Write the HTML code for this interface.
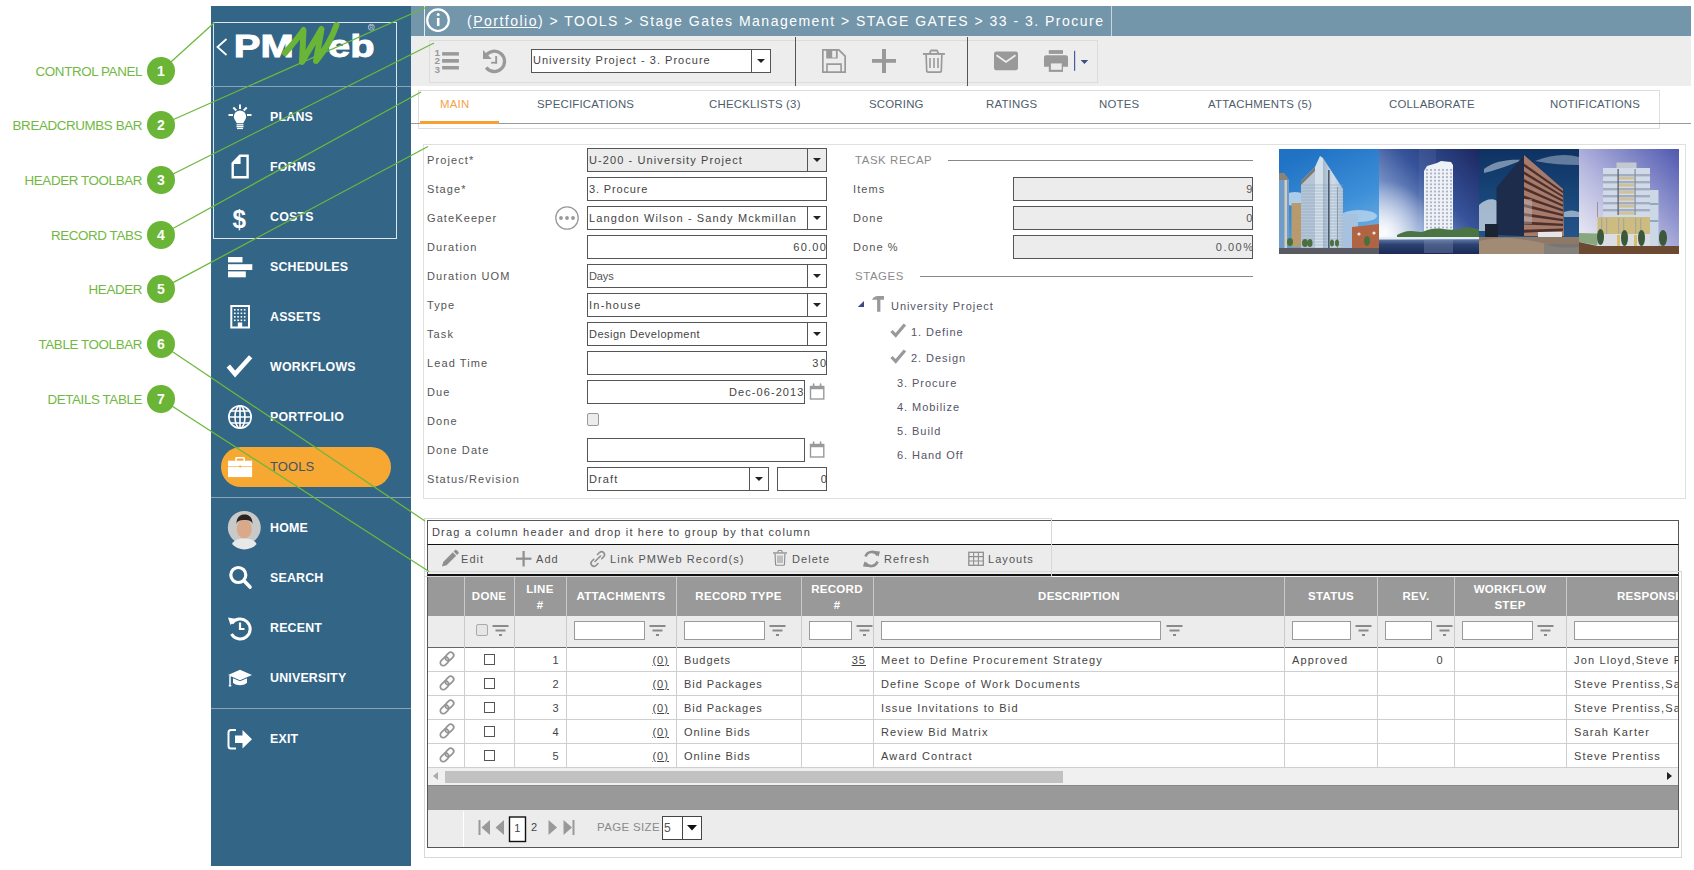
<!DOCTYPE html>
<html><head><meta charset="utf-8">
<style>
*{box-sizing:border-box;margin:0;padding:0}
html,body{width:1694px;height:870px;overflow:hidden;background:#fff}
body{position:relative;font-family:"Liberation Sans",sans-serif;color:#333}
.a{position:absolute}
.t{position:absolute;white-space:nowrap}
/* sidebar */
#sb{left:211px;top:6px;width:200px;height:860px;background:#336587}
.mi{position:absolute;left:59px;color:#fff;font-weight:bold;font-size:12.4px;letter-spacing:0.2px;line-height:14px}
/* breadcrumb */
#bc{left:411px;top:6px;width:1280px;height:30px;background:#7396ab}
#tb{left:411px;top:36px;width:1280px;height:50px;background:#ededed}
.tab{position:absolute;top:97px;font-size:11.4px;color:#4e5d6c;letter-spacing:0.22px;line-height:14px}
.lbl{position:absolute;left:427px;font-size:11px;color:#555;letter-spacing:1.1px;line-height:14px}
.fld{position:absolute;left:587px;width:240px;height:24px;border:1px solid #555;background:#fff;font-size:11px;color:#444;line-height:22px;padding:0 6px;letter-spacing:1.1px;white-space:nowrap;overflow:hidden}
.dd{position:absolute;right:0;top:0;width:19px;height:22px;border-left:1px solid #555}
.dd:after{content:"";position:absolute;left:5px;top:9px;border-left:4px solid transparent;border-right:4px solid transparent;border-top:4.5px solid #222}
.r{text-align:right;padding-right:1px;overflow:visible!important}
</style></head><body>

<!-- SIDEBAR -->
<div id="sb" class="a">
  <div class="a" style="left:1.5px;top:15.5px;width:184px;height:217px;border:1.5px solid #dfe5ea"></div>
  <div class="a" style="left:0;top:80px;width:200px;height:1px;background:#8aa3b5"></div>
  <div class="mi" style="top:104px">PLANS</div>
  <div class="mi" style="top:154px">FORMS</div>
  <div class="mi" style="top:204px">COSTS</div>
  <div class="mi" style="top:254px">SCHEDULES</div>
  <div class="mi" style="top:304px">ASSETS</div>
  <div class="mi" style="top:354px">WORKFLOWS</div>
  <div class="mi" style="top:404px">PORTFOLIO</div>
  <div class="a" style="left:10px;top:441px;width:170px;height:40px;border-radius:20px;background:#f6a833"></div>
  <div class="mi" style="top:454px;color:#3e5468;font-weight:normal;letter-spacing:0.1px;font-size:13px">TOOLS</div>
  <div class="a" style="left:0;top:491px;width:200px;height:1px;background:#8aa3b5"></div>
  <div class="mi" style="top:515px">HOME</div>
  <div class="mi" style="top:565px">SEARCH</div>
  <div class="mi" style="top:615px">RECENT</div>
  <div class="mi" style="top:665px">UNIVERSITY</div>
  <div class="a" style="left:0;top:702px;width:200px;height:1px;background:#8aa3b5"></div>
  <div class="mi" style="top:726px">EXIT</div>
</div>


<!-- LOGO -->
<svg class="a" style="left:211px;top:15px" width="185" height="60" viewBox="0 0 185 60">
  <path d="M15.5 24l-9 8 9 8" fill="none" stroke="#fff" stroke-width="1.8"/>
  <text x="22.8" y="41.6" font-family="Liberation Sans" font-weight="bold" font-size="31.5" fill="#fff" stroke="#fff" stroke-width="0.9" textLength="60" lengthAdjust="spacingAndGlyphs">PM</text>
  <text x="117" y="41.6" font-family="Liberation Sans" font-weight="bold" font-size="31.5" fill="#fff" stroke="#fff" stroke-width="0.9" textLength="46.5" lengthAdjust="spacingAndGlyphs">eb</text>
  <path d="M74 38 C80 31 88 22 92.5 15 L91 47 C98 35 106 22 110.5 14 L105 46 C115 34 122 20 125.5 10" fill="none" stroke="#6ab535" stroke-width="6" stroke-linecap="round" stroke-linejoin="round"/>
  <circle cx="160.3" cy="12.2" r="3" fill="none" stroke="#c9d3db" stroke-width="0.8"/><text x="160.3" y="14.1" text-anchor="middle" font-family="Liberation Sans" font-size="5" fill="#c9d3db">R</text>
</svg>


<!-- SIDEBAR ICONS -->
<svg class="a" style="left:0;top:0;pointer-events:none" width="420" height="870" viewBox="0 0 420 870">
 <g fill="#fff" stroke="none">
  <!-- bulb -->
  <rect x="239" y="104.5" width="2" height="4.5"/>
  <rect x="228.5" y="114" width="4.5" height="2"/>
  <rect x="247" y="114" width="4.5" height="2"/>
  <path d="M232.6 108.2l1.4-1.4 3 3-1.4 1.4z"/>
  <path d="M247.4 108.2l-1.4-1.4-3 3 1.4 1.4z"/>
  <path d="M240 110.5a6.2 6.2 0 0 1 6.2 6.2c0 2.6-2.4 4.3-2.9 6.6h-6.6c-0.5-2.3-2.9-4-2.9-6.6a6.2 6.2 0 0 1 6.2-6.2z"/>
  <rect x="236.5" y="124.2" width="7" height="1.3"/>
  <rect x="236.5" y="126" width="7" height="1.3"/>
  <rect x="237" y="127.8" width="6" height="1.3"/>
  <!-- forms -->
  <path d="M239.5 154.5h9.3v24h-17.3v-15.7zM233.9 164v12.1h12.5v-19.2h-5.8v7.1z" fill-rule="evenodd"/>
  <!-- schedules -->
  <rect x="228" y="257" width="14.5" height="5.4"/>
  <rect x="228" y="264.2" width="24.3" height="5.8"/>
  <rect x="228" y="271.4" width="17.8" height="5.9"/>
  <!-- assets -->
  <path d="M230.3 305h19.7v23.6h-19.7zM232.3 307v19.6h5.5v-4h4.4v4h5.8v-19.6z" fill-rule="evenodd"/>
 </g>
 <g fill="#fff">
  <rect x="234" y="309" width="1.6" height="1.6"/><rect x="237.3" y="309" width="1.6" height="1.6"/><rect x="240.6" y="309" width="1.6" height="1.6"/><rect x="243.9" y="309" width="1.6" height="1.6"/>
  <rect x="234" y="312.5" width="1.6" height="1.6"/><rect x="237.3" y="312.5" width="1.6" height="1.6"/><rect x="240.6" y="312.5" width="1.6" height="1.6"/><rect x="243.9" y="312.5" width="1.6" height="1.6"/>
  <rect x="234" y="316" width="1.6" height="1.6"/><rect x="237.3" y="316" width="1.6" height="1.6"/><rect x="240.6" y="316" width="1.6" height="1.6"/><rect x="243.9" y="316" width="1.6" height="1.6"/>
  <rect x="234" y="319.5" width="1.6" height="1.6"/><rect x="237.3" y="319.5" width="1.6" height="1.6"/><rect x="240.6" y="319.5" width="1.6" height="1.6"/><rect x="243.9" y="319.5" width="1.6" height="1.6"/>
 </g>
 <text x="232.5" y="228" font-family="Liberation Sans" font-weight="bold" font-size="26" fill="#fff" textLength="13.5" lengthAdjust="spacingAndGlyphs">$</text>
 <!-- check -->
 <path d="M229.8 367.8l5.3 6.2 14-15.5" fill="none" stroke="#fff" stroke-width="4.6" stroke-linecap="square"/>
 <!-- globe -->
 <g fill="none" stroke="#fff" stroke-width="1.6">
  <circle cx="240" cy="417" r="11.2"/>
  <ellipse cx="240" cy="417" rx="5" ry="11.2"/>
  <path d="M240 405.8v22.4M228.8 417h22.4M230.5 411h19M230.5 423h19"/>
 </g>
 <!-- briefcase -->
 <g fill="#fff">
  <path d="M235.2 461v-2.6c0-0.8 0.6-1.4 1.4-1.4h7c0.8 0 1.4 0.6 1.4 1.4v2.6h-1.6v-2.4h-6.6v2.4z"/>
  <rect x="228" y="460.7" width="24.1" height="16.4"/>
 </g>
 <rect x="228" y="466" width="24.1" height="1" fill="#f8c880"/>
 <rect x="239.3" y="465.6" width="1.8" height="1.8" fill="#f6a833"/>
 <!-- avatar -->
 <circle cx="244.3" cy="527.5" r="16.5" fill="#c9c9c9"/>
 <ellipse cx="244.3" cy="529" rx="7.5" ry="9.5" fill="#d9a98a"/>
 <path d="M236.5 524c0-7 3.5-9.5 8-9.5s8 2.5 8 9.5c-1-3-3-4-8-4s-7 1-8 4z" fill="#2a2420"/>
 <path d="M232 544c2-4 6-5.5 12.3-5.5s10.3 1.5 12.3 5.5a16.5 16.5 0 0 1-24.6 0z" fill="#e8e8e8"/>
 <!-- search -->
 <g fill="none" stroke="#fff" stroke-linecap="round">
  <circle cx="238.3" cy="575" r="7.5" stroke-width="3.2"/>
  <path d="M244 580.8l6 6.3" stroke-width="3.6"/>
 </g>
 <!-- recent -->
 <g fill="none" stroke="#fff" stroke-width="3">
  <path d="M231.8 623.5a10 10 0 1 1-0.3 10.5"/>
  <path d="M240 622.5v6.5h4.5" stroke-width="2.2"/>
 </g>
 <path d="M228 617.5l8.5 1.5-6 6z" fill="#fff"/>
 <!-- university -->
 <path d="M228 675l12-5.2 12 5.2-12 5.2z" fill="#fff"/>
 <path d="M233 678.2v4.6c2 1.8 4.6 2.4 7 2.4s5-0.6 7-2.4v-4.6l-7 3z" fill="#fff"/>
 <path d="M230 676v8.5" stroke="#fff" stroke-width="1.5"/>
 <path d="M228.8 684.5h2.4v2h-2.4z" fill="#fff"/>
 <!-- exit -->
 <path d="M236 730h-5a2.5 2.5 0 0 0-2.5 2.5v13.5a2.5 2.5 0 0 0 2.5 2.5h5" fill="none" stroke="#fff" stroke-width="2"/>
 <path d="M235 735.5h7.5v-5.5l9.5 9.2-9.5 9.3v-5.5h-7.5z" fill="#fff"/>
</svg>

<!-- BREADCRUMB -->
<div id="bc" class="a">
  <div class="a" style="left:13px;top:0;width:1px;height:30px;background:#e4eaee"></div>
  <div class="a" style="left:700px;top:0;width:1px;height:30px;background:#c8d6de"></div>
  <div class="t" style="left:56px;top:7px;font-size:14px;color:#fff;letter-spacing:1.49px;line-height:16px">(<u>Portfolio</u>) &gt; TOOLS &gt; Stage Gates Management &gt; STAGE GATES &gt; 33 - 3. Procure</div>
</div>

<!-- TOOLBAR -->
<div id="tb" class="a">
  <div class="a" style="left:18px;top:4px;width:669px;height:43px;border:1px solid #dcdcdc"></div>
  <div class="a" style="left:384px;top:1px;width:1px;height:49px;background:#555"></div>
  <div class="a" style="left:556px;top:1px;width:1px;height:49px;background:#555"></div>
</div>
<div class="fld" style="left:531px;top:49px;width:240px;height:24px;line-height:20px;padding-left:1px;letter-spacing:1.02px">University Project - 3. Procure<div class="dd" style="height:22px"></div></div>


<!-- TOOLBAR ICONS -->
<svg class="a" style="left:411px;top:0" width="700" height="90" viewBox="411 0 700 90">
 <!-- info -->
 <circle cx="438" cy="20.2" r="10.8" fill="none" stroke="#fff" stroke-width="2.2"/>
 <rect x="436.9" y="18" width="2.6" height="8" fill="#fff"/>
 <circle cx="438.2" cy="14.6" r="1.5" fill="#fff"/>
 <g fill="#999">
  <!-- list -->
  <text x="434.6" y="55.8" font-family="Liberation Sans" font-weight="bold" font-size="9" textLength="5.5" lengthAdjust="spacingAndGlyphs">1</text>
  <text x="434.6" y="64.4" font-family="Liberation Sans" font-weight="bold" font-size="9" textLength="5.5" lengthAdjust="spacingAndGlyphs">2</text>
  <text x="434.6" y="72.9" font-family="Liberation Sans" font-weight="bold" font-size="9" textLength="5.5" lengthAdjust="spacingAndGlyphs">3</text>
  <rect x="442.1" y="52.1" width="16.8" height="3.5"/>
  <rect x="442.1" y="59" width="16.8" height="3.7"/>
  <rect x="442.1" y="66" width="16.8" height="3.5"/>
  <!-- history -->
  <path d="M483 50.1v8.8h8.7z"/>
  <rect x="495.2" y="56" width="1.9" height="7.6"/>
  <rect x="491.1" y="61.8" width="6" height="1.8"/>
  <!-- save -->
  <path d="M822 49h17.2l6.8 6.8v17.2h-24zM823.7 50.7v20.6h20.6v-14.8l-5.8-5.8z" fill-rule="evenodd"/>
  <path d="M826.2 49.5h11.5v9h-11.5zM832.2 50.6v6.8h3.7v-6.8z" fill-rule="evenodd"/>
  <path d="M826.2 63.3h15.7v9h-15.7zM827.8 64.9v7.4h12.5v-7.4z" fill-rule="evenodd"/>
  <!-- plus -->
  <rect x="882" y="49" width="4" height="24"/>
  <rect x="872" y="59" width="24" height="3.8"/>
  <!-- trash -->
  <rect x="922.9" y="53" width="22" height="1.9"/>
  <path d="M928.5 54l1.3-3.3c0.3-0.8 0.9-1.2 1.7-1.2h5c0.8 0 1.4 0.4 1.7 1.2l1.3 3.3h-1.9l-1-2.6h-5.2l-1 2.6z"/>
  <path d="M925.3 55h17.4l-0.6 16c0 1.2-1 2-2.2 2h-11.8c-1.2 0-2.2-0.8-2.2-2zM927 55l0.5 15.6c0 0.4 0.3 0.7 0.7 0.7h11.6c0.4 0 0.7-0.3 0.7-0.7l0.5-15.6z" fill-rule="evenodd"/>
  <rect x="929.2" y="58" width="1.6" height="10"/>
  <rect x="933.2" y="58" width="1.6" height="10"/>
  <rect x="937.2" y="58" width="1.6" height="10"/>
  <!-- mail -->
  <rect x="994" y="51.5" width="24" height="18.7" rx="2.2"/>
  <!-- print -->
  <rect x="1048.8" y="50.1" width="14.2" height="3.8"/>
  <path d="M1044 66.8v-9.6c0-1.1 0.9-2 2-2h20c1.1 0 2 0.9 2 2v9.6z"/>
  <rect x="1048.8" y="62.4" width="14.2" height="9.5"/>
 </g>
 <path d="M996.5 55.2l9.5 6.8 9.5-6.8" fill="none" stroke="#eee" stroke-width="1.8"/>
 <rect x="1050.9" y="63.4" width="10.8" height="6.4" fill="#ececec"/>
 <path d="M486.2 67.5a10.2 10.2 0 1 0-0.5-11.6" fill="none" stroke="#999" stroke-width="3.3"/>
 <rect x="1074" y="50.8" width="1.2" height="20" fill="#4a5a9a"/>
 <path d="M1080.7 60h7.5l-3.75 4z" fill="#3d4d8a"/>
</svg>

<!-- TABS -->
<div class="a" style="left:418px;top:90px;width:1242px;height:39px;border:1px solid #dedede"></div>
<div class="a" style="left:411px;top:123px;width:1280px;height:1px;background:#9a9a9a"></div>
<div class="a" style="left:420px;top:121px;width:79px;height:2.5px;background:#f5a033"></div>
<div class="tab" style="left:440px;color:#f4a24a">MAIN</div>
<div class="tab" style="left:537px">SPECIFICATIONS</div>
<div class="tab" style="left:709px">CHECKLISTS (3)</div>
<div class="tab" style="left:869px">SCORING</div>
<div class="tab" style="left:986px">RATINGS</div>
<div class="tab" style="left:1099px">NOTES</div>
<div class="tab" style="left:1208px">ATTACHMENTS (5)</div>
<div class="tab" style="left:1389px">COLLABORATE</div>
<div class="tab" style="left:1550px">NOTIFICATIONS</div>

<!-- FORM BOX -->
<div class="a" style="left:423px;top:144px;width:1263px;height:355px;border:1px solid #e0e0e0"></div>


<!-- FORM LEFT -->
<div class="lbl" style="top:153px">Project*</div>
<div class="lbl" style="top:182px">Stage*</div>
<div class="lbl" style="top:211px">GateKeeper</div>
<div class="lbl" style="top:240px">Duration</div>
<div class="lbl" style="top:269px">Duration UOM</div>
<div class="lbl" style="top:298px">Type</div>
<div class="lbl" style="top:327px">Task</div>
<div class="lbl" style="top:356px">Lead Time</div>
<div class="lbl" style="top:385px">Due</div>
<div class="lbl" style="top:414px">Done</div>
<div class="lbl" style="top:443px">Done Date</div>
<div class="lbl" style="top:472px">Status/Revision</div>

<div class="fld" style="top:148px;background:#ececec;padding-left:1px;letter-spacing:1.1px">U-200 - University Project<div class="dd"></div></div>
<div class="fld" style="top:177px;padding-left:1px;letter-spacing:0.84px">3. Procure</div>
<div class="fld" style="top:206px;padding-left:1px;letter-spacing:1.13px">Langdon Wilson - Sandy Mckmillan<div class="dd" style="background:#fff"></div></div>
<div class="fld r" style="top:235px;letter-spacing:1.22px"><span style="position:relative;left:2px">60.00</span></div>
<div class="fld" style="top:264px;padding-left:1px;color:#555;letter-spacing:-0.1px">Days<div class="dd"></div></div>
<div class="fld" style="top:293px;padding-left:1px;letter-spacing:1.23px">In-house<div class="dd"></div></div>
<div class="fld" style="top:322px;padding-left:1px;letter-spacing:0.5px">Design Development<div class="dd"></div></div>
<div class="fld r" style="top:351px;letter-spacing:1.8px"><span style="position:relative;left:3px">30</span></div>
<div class="fld r" style="top:380px;width:218px;letter-spacing:1.09px"><span style="position:relative;left:1.5px">Dec-06-2013</span></div>
<div class="a" style="left:587px;top:413px;width:12px;height:13px;border:1px solid #999;border-radius:2px;background:#ececec"></div>
<div class="fld" style="top:438px;width:218px"></div>
<div class="fld" style="top:467px;width:182px;padding-left:1px;letter-spacing:1.12px">Draft<div class="dd"></div></div>
<div class="fld r" style="top:467px;left:777px;width:50px"><span style="position:relative;left:3px">0</span></div>


<!-- TASK RECAP -->
<div class="t" style="left:855px;top:153px;font-size:11.4px;color:#8a8a8a;letter-spacing:0.6px;line-height:14px">TASK RECAP</div>
<div class="a" style="left:948px;top:160px;width:305px;height:1px;background:#888"></div>
<div class="lbl" style="left:853px;top:182px">Items</div>
<div class="lbl" style="left:853px;top:211px">Done</div>
<div class="lbl" style="left:853px;top:240px">Done %</div>
<div class="fld r" style="left:1013px;top:177px;width:240px;background:#ececec;color:#555"><span style="position:relative;left:2.5px">9</span></div>
<div class="fld r" style="left:1013px;top:206px;width:240px;background:#ececec;color:#555"><span style="position:relative;left:2.5px">0</span></div>
<div class="fld r" style="left:1013px;top:235px;width:240px;background:#ececec;color:#555;letter-spacing:1.5px"><span style="position:relative;left:3.5px">0.00%</span></div>
<div class="t" style="left:855px;top:269px;font-size:11.4px;color:#8a8a8a;letter-spacing:0.6px;line-height:14px">STAGES</div>
<div class="a" style="left:920px;top:276px;width:333px;height:1px;background:#888"></div>
<div class="lbl" style="left:891px;top:299px;color:#556;letter-spacing:0.95px">University Project</div>
<div class="lbl" style="left:911px;top:325px;color:#556;letter-spacing:0.95px">1. Define</div>
<div class="lbl" style="left:911px;top:351px;color:#556;letter-spacing:0.95px">2. Design</div>
<div class="lbl" style="left:897px;top:376px;color:#556;letter-spacing:0.95px">3. Procure</div>
<div class="lbl" style="left:897px;top:400px;color:#556;letter-spacing:0.95px">4. Mobilize</div>
<div class="lbl" style="left:897px;top:424px;color:#556;letter-spacing:0.95px">5. Build</div>
<div class="lbl" style="left:897px;top:448px;color:#556;letter-spacing:0.95px">6. Hand Off</div>



<!-- FORM ICONS -->
<svg class="a" style="left:550px;top:140px" width="380" height="340" viewBox="550 140 380 340">
 <circle cx="567" cy="218" r="11.2" fill="#fff" stroke="#9a9a9a" stroke-width="1.3"/>
 <circle cx="561" cy="218" r="1.9" fill="#999"/><circle cx="567" cy="218" r="1.9" fill="#999"/><circle cx="573" cy="218" r="1.9" fill="#999"/>
 <g fill="none" stroke="#9a9a9a">
  <rect x="810.5" y="386.5" width="13.3" height="12.5" stroke-width="1.4"/>
  <path d="M810.5 388h13.3" stroke-width="2.5"/>
  <path d="M813.6 384v4M820.6 384v4" stroke-width="1.6" stroke-linecap="round"/>
  <rect x="810.5" y="444.5" width="13.3" height="12.5" stroke-width="1.4"/>
  <path d="M810.5 446h13.3" stroke-width="2.5"/>
  <path d="M813.6 442v4M820.6 442v4" stroke-width="1.6" stroke-linecap="round"/>
 </g>
 <path d="M857.8 307l6.2-6v6z" fill="#3d4a80"/>
 <path d="M872 300c1-2.5 3-4 6-4h6v3.7h-3.6v12h-3.3v-12h-2.6c-1.2 0-2 0.2-2.5 0.3z" fill="#999"/>
 <path d="M891.5 331l4.2 4.3 9.2-10.8" fill="none" stroke="#999" stroke-width="3.2"/>
 <path d="M891.5 357l4.2 4.3 9.2-10.8" fill="none" stroke="#999" stroke-width="3.2"/>
</svg>

<!-- IMAGES -->
<svg class="a" style="left:1279px;top:149px" width="400" height="105" viewBox="0 0 400 105">
 <defs>
  <linearGradient id="g1" x1="0.3" y1="0" x2="0.7" y2="1"><stop offset="0" stop-color="#1f72c4"/><stop offset="0.55" stop-color="#3d8fd8"/><stop offset="1" stop-color="#7ab6e6"/></linearGradient>
  <linearGradient id="g2" x1="1" y1="0" x2="0" y2="1"><stop offset="0" stop-color="#1c2760"/><stop offset="0.4" stop-color="#36539a"/><stop offset="0.75" stop-color="#8ea8d6"/><stop offset="1" stop-color="#f0f4fa"/></linearGradient>
  <radialGradient id="g2r" cx="0.05" cy="0.8" r="0.5"><stop offset="0" stop-color="#fff" stop-opacity="0.95"/><stop offset="1" stop-color="#fff" stop-opacity="0"/></radialGradient>
  <linearGradient id="g2w" x1="0" y1="0" x2="0" y2="1"><stop offset="0" stop-color="#5c76a4"/><stop offset="0.35" stop-color="#2c4272"/><stop offset="1" stop-color="#1a2a56"/></linearGradient>
  <linearGradient id="g3" x1="0" y1="0" x2="0" y2="1"><stop offset="0" stop-color="#0e3262"/><stop offset="0.6" stop-color="#1c4c80"/><stop offset="1" stop-color="#2a5a8c"/></linearGradient>
  <linearGradient id="g4" x1="0" y1="1" x2="1" y2="0"><stop offset="0" stop-color="#f6f4f8"/><stop offset="0.45" stop-color="#b4b6de"/><stop offset="1" stop-color="#5058b0"/></linearGradient>
  <linearGradient id="gb1" x1="0" y1="0" x2="1" y2="0"><stop offset="0" stop-color="#a4b8cc"/><stop offset="0.5" stop-color="#d0dce8"/><stop offset="1" stop-color="#b4c6d8"/></linearGradient>
 </defs>
 <!-- image 1 -->
 <rect x="0" y="0" width="100" height="105" fill="url(#g1)"/>
 <ellipse cx="16" cy="50" rx="12" ry="7" fill="#d4e6f4" opacity="0.75"/>
 <ellipse cx="80" cy="67" rx="18" ry="6" fill="#d8e8f4" opacity="0.6"/>
 <path d="M0 24h5l5 7v73H0z" fill="#6f9cc8"/>
 <path d="M0 24h5l5 7H0z" fill="#8a8478"/>
 <rect x="5.5" y="31" width="2.5" height="73" fill="#d4ccbc"/>
 <rect x="12.5" y="54" width="9.5" height="44" fill="#b89a6c"/>
 <path d="M22 32l14-14v86H22z" fill="#b6c6d8"/>
 <path d="M22 32l14-14v4l-14 14z" fill="#7a7a70"/>
 <path d="M36 18l5-11 3 2v95h-8z" fill="#d4e0ea"/>
 <path d="M44 9l20 31v64H44z" fill="url(#gb1)"/>
 <g stroke="#8ea4bc" stroke-width="0.6" opacity="0.9"><path d="M22 36h42"/><path d="M22 39h42"/><path d="M22 42h42"/><path d="M22 45h42"/><path d="M22 48h42"/><path d="M22 51h42"/><path d="M22 54h42"/><path d="M22 57h42"/><path d="M22 60h42"/><path d="M22 63h42"/><path d="M22 66h42"/><path d="M22 69h42"/><path d="M22 72h42"/><path d="M22 75h42"/><path d="M22 78h42"/><path d="M22 81h42"/><path d="M22 84h42"/><path d="M22 87h42"/><path d="M22 90h42"/><path d="M22 93h42"/><path d="M22 96h42"/><path d="M22 99h42"/></g>
 <rect x="49" y="21" width="1.6" height="80" fill="#4c5a6c"/>
 <rect x="58" y="38" width="1" height="62" fill="#8a9aac"/>
 <rect x="64" y="65" width="15" height="36" fill="#a6c2de"/>
 <path d="M73 78l27-3v29H73z" fill="#b06444"/>
 <circle cx="80" cy="85" r="1.6" fill="#f0e8e0"/><circle cx="95" cy="84" r="1.6" fill="#f0e8e0"/>
 <g fill="#4a7040"><ellipse cx="11" cy="93" rx="3" ry="4"/><ellipse cx="26" cy="94" rx="3" ry="4"/><ellipse cx="31" cy="94" rx="2.5" ry="4"/><ellipse cx="53" cy="94" rx="2" ry="3.5"/><ellipse cx="58" cy="94" rx="2" ry="3.5"/><ellipse cx="88" cy="92" rx="3" ry="5"/></g>
 <rect x="0" y="99" width="100" height="6" fill="#5a5a62"/>
 <!-- image 2 -->
 <rect x="100" y="0" width="100" height="105" fill="url(#g2)"/>
 <rect x="100" y="0" width="100" height="105" fill="url(#g2r)"/>
 <rect x="140" y="0" width="17" height="104" fill="#ffffff" opacity="0.06"/>
 <path d="M145 22l3-5 10-3 4-2 10 1 2 3v66h-29z" fill="#eef1f5"/>
 <g fill="#aab6c8"><rect x="147" y="20.0" width="2" height="1.8"/><rect x="151" y="20.0" width="2" height="1.8"/><rect x="155" y="20.0" width="2" height="1.8"/><rect x="159" y="20.0" width="2" height="1.8"/><rect x="163" y="20.0" width="2" height="1.8"/><rect x="167" y="20.0" width="2" height="1.8"/><rect x="171" y="20.0" width="2" height="1.8"/><rect x="147" y="23.6" width="2" height="1.8"/><rect x="151" y="23.6" width="2" height="1.8"/><rect x="155" y="23.6" width="2" height="1.8"/><rect x="159" y="23.6" width="2" height="1.8"/><rect x="163" y="23.6" width="2" height="1.8"/><rect x="167" y="23.6" width="2" height="1.8"/><rect x="171" y="23.6" width="2" height="1.8"/><rect x="147" y="27.2" width="2" height="1.8"/><rect x="151" y="27.2" width="2" height="1.8"/><rect x="155" y="27.2" width="2" height="1.8"/><rect x="159" y="27.2" width="2" height="1.8"/><rect x="163" y="27.2" width="2" height="1.8"/><rect x="167" y="27.2" width="2" height="1.8"/><rect x="171" y="27.2" width="2" height="1.8"/><rect x="147" y="30.8" width="2" height="1.8"/><rect x="151" y="30.8" width="2" height="1.8"/><rect x="155" y="30.8" width="2" height="1.8"/><rect x="159" y="30.8" width="2" height="1.8"/><rect x="163" y="30.8" width="2" height="1.8"/><rect x="167" y="30.8" width="2" height="1.8"/><rect x="171" y="30.8" width="2" height="1.8"/><rect x="147" y="34.4" width="2" height="1.8"/><rect x="151" y="34.4" width="2" height="1.8"/><rect x="155" y="34.4" width="2" height="1.8"/><rect x="159" y="34.4" width="2" height="1.8"/><rect x="163" y="34.4" width="2" height="1.8"/><rect x="167" y="34.4" width="2" height="1.8"/><rect x="171" y="34.4" width="2" height="1.8"/><rect x="147" y="38.0" width="2" height="1.8"/><rect x="151" y="38.0" width="2" height="1.8"/><rect x="155" y="38.0" width="2" height="1.8"/><rect x="159" y="38.0" width="2" height="1.8"/><rect x="163" y="38.0" width="2" height="1.8"/><rect x="167" y="38.0" width="2" height="1.8"/><rect x="171" y="38.0" width="2" height="1.8"/><rect x="147" y="41.6" width="2" height="1.8"/><rect x="151" y="41.6" width="2" height="1.8"/><rect x="155" y="41.6" width="2" height="1.8"/><rect x="159" y="41.6" width="2" height="1.8"/><rect x="163" y="41.6" width="2" height="1.8"/><rect x="167" y="41.6" width="2" height="1.8"/><rect x="171" y="41.6" width="2" height="1.8"/><rect x="147" y="45.2" width="2" height="1.8"/><rect x="151" y="45.2" width="2" height="1.8"/><rect x="155" y="45.2" width="2" height="1.8"/><rect x="159" y="45.2" width="2" height="1.8"/><rect x="163" y="45.2" width="2" height="1.8"/><rect x="167" y="45.2" width="2" height="1.8"/><rect x="171" y="45.2" width="2" height="1.8"/><rect x="147" y="48.8" width="2" height="1.8"/><rect x="151" y="48.8" width="2" height="1.8"/><rect x="155" y="48.8" width="2" height="1.8"/><rect x="159" y="48.8" width="2" height="1.8"/><rect x="163" y="48.8" width="2" height="1.8"/><rect x="167" y="48.8" width="2" height="1.8"/><rect x="171" y="48.8" width="2" height="1.8"/><rect x="147" y="52.4" width="2" height="1.8"/><rect x="151" y="52.4" width="2" height="1.8"/><rect x="155" y="52.4" width="2" height="1.8"/><rect x="159" y="52.4" width="2" height="1.8"/><rect x="163" y="52.4" width="2" height="1.8"/><rect x="167" y="52.4" width="2" height="1.8"/><rect x="171" y="52.4" width="2" height="1.8"/><rect x="147" y="56.0" width="2" height="1.8"/><rect x="151" y="56.0" width="2" height="1.8"/><rect x="155" y="56.0" width="2" height="1.8"/><rect x="159" y="56.0" width="2" height="1.8"/><rect x="163" y="56.0" width="2" height="1.8"/><rect x="167" y="56.0" width="2" height="1.8"/><rect x="171" y="56.0" width="2" height="1.8"/><rect x="147" y="59.6" width="2" height="1.8"/><rect x="151" y="59.6" width="2" height="1.8"/><rect x="155" y="59.6" width="2" height="1.8"/><rect x="159" y="59.6" width="2" height="1.8"/><rect x="163" y="59.6" width="2" height="1.8"/><rect x="167" y="59.6" width="2" height="1.8"/><rect x="171" y="59.6" width="2" height="1.8"/><rect x="147" y="63.2" width="2" height="1.8"/><rect x="151" y="63.2" width="2" height="1.8"/><rect x="155" y="63.2" width="2" height="1.8"/><rect x="159" y="63.2" width="2" height="1.8"/><rect x="163" y="63.2" width="2" height="1.8"/><rect x="167" y="63.2" width="2" height="1.8"/><rect x="171" y="63.2" width="2" height="1.8"/><rect x="147" y="66.8" width="2" height="1.8"/><rect x="151" y="66.8" width="2" height="1.8"/><rect x="155" y="66.8" width="2" height="1.8"/><rect x="159" y="66.8" width="2" height="1.8"/><rect x="163" y="66.8" width="2" height="1.8"/><rect x="167" y="66.8" width="2" height="1.8"/><rect x="171" y="66.8" width="2" height="1.8"/><rect x="147" y="70.4" width="2" height="1.8"/><rect x="151" y="70.4" width="2" height="1.8"/><rect x="155" y="70.4" width="2" height="1.8"/><rect x="159" y="70.4" width="2" height="1.8"/><rect x="163" y="70.4" width="2" height="1.8"/><rect x="167" y="70.4" width="2" height="1.8"/><rect x="171" y="70.4" width="2" height="1.8"/><rect x="147" y="74.0" width="2" height="1.8"/><rect x="151" y="74.0" width="2" height="1.8"/><rect x="155" y="74.0" width="2" height="1.8"/><rect x="159" y="74.0" width="2" height="1.8"/><rect x="163" y="74.0" width="2" height="1.8"/><rect x="167" y="74.0" width="2" height="1.8"/><rect x="171" y="74.0" width="2" height="1.8"/><rect x="147" y="77.6" width="2" height="1.8"/><rect x="151" y="77.6" width="2" height="1.8"/><rect x="155" y="77.6" width="2" height="1.8"/><rect x="159" y="77.6" width="2" height="1.8"/><rect x="163" y="77.6" width="2" height="1.8"/><rect x="167" y="77.6" width="2" height="1.8"/><rect x="171" y="77.6" width="2" height="1.8"/><rect x="147" y="81.2" width="2" height="1.8"/><rect x="151" y="81.2" width="2" height="1.8"/><rect x="155" y="81.2" width="2" height="1.8"/><rect x="159" y="81.2" width="2" height="1.8"/><rect x="163" y="81.2" width="2" height="1.8"/><rect x="167" y="81.2" width="2" height="1.8"/><rect x="171" y="81.2" width="2" height="1.8"/></g>
 <path d="M118 86c4-2 8-4 14-4s10 2 14 0 10-3 18-2 14 1 20-1 8 0 16 1v8h-82z" fill="#4a7444"/>
 <rect x="100" y="88" width="100" height="2.5" fill="#e4ecf4"/>
 <rect x="100" y="90.5" width="100" height="14.5" fill="url(#g2w)"/>
 <rect x="145" y="91" width="29" height="13" fill="#8496b8" opacity="0.35"/>
 <!-- image 3 -->
 <rect x="200" y="0" width="100" height="105" fill="url(#g3)"/>
 <path d="M205 20c10-8 25-10 40-9-10 3-20 8-40 13z" fill="#dce6f0" opacity="0.5"/>
 <path d="M256 12c15-6 30-8 44-4v8c-14 0-28-1-44-4z" fill="#dce6f0" opacity="0.4"/>
 <path d="M200 56c6-6 14-7 18-4v30h-18z" fill="#e0e8f0" opacity="0.7"/>
 <path d="M285 63c5-2 10-2 15 0v5h-15z" fill="#e0e8f0" opacity="0.6"/>
 <path d="M245 6L217.5 38.5V86l27.5 1z" fill="#1c2c4a"/>
 <path d="M245 6L284 40l1 47h-40z" fill="#a87a6a"/>
 <g fill="#3c2424" opacity="0.85"><path d="M245 14.5L284 42L284 44.2L245 17.5z"/><path d="M245 22.3L284 46.4L284 48.6L245 25.3z"/><path d="M245 30L284 50.7L284 52.900000000000006L245 33z"/><path d="M245 38L284 55.5L284 57.7L245 41z"/><path d="M245 46.4L284 60.3L284 62.5L245 49.4z"/><path d="M245 54.9L284 65L284 67.2L245 57.9z"/><path d="M245 64L284 70L284 72.2L245 67z"/><path d="M245 72.4L284 74.8L284 77.0L245 75.4z"/><path d="M245 80.8L284 79.6L284 81.8L245 83.8z"/></g>
 <rect x="245" y="50" width="8" height="25" fill="#d8d0d0" opacity="0.35"/>
 <rect x="206" y="75" width="13" height="13" fill="#1a2434"/>
 <rect x="259" y="83" width="24" height="7" fill="#e4e6ea"/>
 <path d="M200 88h100v17H200z" fill="#8e7866"/>
 <path d="M200 92c12-3 28-4 40-2s22 3 30 6 20 3 30 2v7H200z" fill="#a89078" opacity="0.8"/>
 <path d="M265 95h35v10h-35z" fill="#607080" opacity="0.45"/>
 <!-- image 4 -->
 <rect x="300" y="0" width="100" height="105" fill="url(#g4)"/>
 <rect x="337.5" y="13.5" width="20" height="5.5" fill="#c4c8d0"/>
 <rect x="324" y="19" width="47" height="49" fill="#d0dae8"/>
 <g fill="#9aa2b6" opacity="0.8"><rect x="324" y="25" width="47" height="2.4"/><rect x="324" y="32" width="47" height="2.4"/><rect x="324" y="39" width="47" height="2.4"/><rect x="324" y="46" width="47" height="2.4"/><rect x="324" y="53" width="47" height="2.4"/><rect x="324" y="60" width="47" height="2.4"/></g>
 <g fill="#d4c088" opacity="0.9"><rect x="339.5" y="28" width="16" height="2.6"/><rect x="339.5" y="35" width="16" height="2.6"/><rect x="339.5" y="42" width="16" height="2.6"/><rect x="339.5" y="49" width="16" height="2.6"/><rect x="339.5" y="56" width="16" height="2.6"/><rect x="339.5" y="63" width="16" height="2.6"/></g>
 <rect x="338.5" y="20" width="1.2" height="46" fill="#505868"/>
 <rect x="355.5" y="20" width="1.2" height="46" fill="#8890a0"/>
 <rect x="371" y="41" width="8.5" height="58" fill="#ccd8e6"/>
 <rect x="371" y="54" width="8.5" height="2" fill="#90a8c0"/><rect x="371" y="71" width="8.5" height="2" fill="#90a8c0"/>
 <rect x="318.5" y="68" width="52.5" height="17" fill="#ccbc80"/>
 <g fill="#a0a4a8" opacity="0.8"><rect x="322" y="69" width="1.2" height="16"/><rect x="327" y="69" width="1.2" height="16"/><rect x="339" y="69" width="1.2" height="16"/><rect x="344" y="69" width="1.2" height="16"/><rect x="356" y="69" width="1.2" height="16"/><rect x="361" y="69" width="1.2" height="16"/></g>
 <rect x="318.5" y="85" width="52.5" height="12" fill="#dadde2"/>
 <g fill="#d8bc70"><rect x="338" y="86" width="3" height="11"/><rect x="355" y="86" width="3" height="11"/></g>
 <rect x="318" y="53" width="0.8" height="15" fill="#888"/>
 <path d="M300 84l18.5 0.5v12l-18.5-3.5z" fill="#8aa880"/>
 <g fill="#3c583a">
  <ellipse cx="321.5" cy="88" rx="3.5" ry="8"/><ellipse cx="345.5" cy="89" rx="3.5" ry="8"/><ellipse cx="362.5" cy="89" rx="3.5" ry="8"/><ellipse cx="384" cy="89" rx="4" ry="8"/>
 </g>
 <path d="M300 93l18.5 4h81.5v8H300z" fill="#6c4a32"/>
</svg>

<!-- TABLE -->
<div class="a" style="left:427px;top:520px;width:1252px;height:25px;border:1px solid #555;border-bottom:none;background:#fff"></div>
<div class="t" style="left:432px;top:525px;font-size:11px;color:#444;letter-spacing:1.18px;line-height:14px">Drag a column header and drop it here to group by that column</div>
<div class="a" style="left:427px;top:544px;width:1252px;height:32px;border-top:1.5px solid #111;border-bottom:2px solid #111;border-left:1px solid #555;border-right:1px solid #555;background:#ececec"></div>
<div class="a" style="left:427px;top:576px;width:1252px;height:272px;border-left:1px solid #555;border-right:1px solid #555;border-bottom:1px solid #555;overflow:hidden">
  <div class="a" style="left:0;top:1px;width:1252px;height:39px;background:#999"></div>
  <div class="a" style="left:0;top:40px;width:1252px;height:32px;background:#ececec;border-bottom:1px solid #666"></div>
</div>

<div class="a" style="left:463.9px;top:577px;width:1px;height:70px;background:#c9c9c9"></div>
<div class="a" style="left:463.9px;top:647px;width:1px;height:120px;background:#cfcfcf"></div>
<div class="a" style="left:513.9px;top:577px;width:1px;height:70px;background:#c9c9c9"></div>
<div class="a" style="left:513.9px;top:647px;width:1px;height:120px;background:#cfcfcf"></div>
<div class="a" style="left:565.7px;top:577px;width:1px;height:70px;background:#c9c9c9"></div>
<div class="a" style="left:565.7px;top:647px;width:1px;height:120px;background:#cfcfcf"></div>
<div class="a" style="left:675.8px;top:577px;width:1px;height:70px;background:#c9c9c9"></div>
<div class="a" style="left:675.8px;top:647px;width:1px;height:120px;background:#cfcfcf"></div>
<div class="a" style="left:800.7px;top:577px;width:1px;height:70px;background:#c9c9c9"></div>
<div class="a" style="left:800.7px;top:647px;width:1px;height:120px;background:#cfcfcf"></div>
<div class="a" style="left:872.9px;top:577px;width:1px;height:70px;background:#c9c9c9"></div>
<div class="a" style="left:872.9px;top:647px;width:1px;height:120px;background:#cfcfcf"></div>
<div class="a" style="left:1283.8px;top:577px;width:1px;height:70px;background:#c9c9c9"></div>
<div class="a" style="left:1283.8px;top:647px;width:1px;height:120px;background:#cfcfcf"></div>
<div class="a" style="left:1376.9px;top:577px;width:1px;height:70px;background:#c9c9c9"></div>
<div class="a" style="left:1376.9px;top:647px;width:1px;height:120px;background:#cfcfcf"></div>
<div class="a" style="left:1454.0px;top:577px;width:1px;height:70px;background:#c9c9c9"></div>
<div class="a" style="left:1454.0px;top:647px;width:1px;height:120px;background:#cfcfcf"></div>
<div class="a" style="left:1565.9px;top:577px;width:1px;height:70px;background:#c9c9c9"></div>
<div class="a" style="left:1565.9px;top:647px;width:1px;height:120px;background:#cfcfcf"></div>
<div class="a" style="left:428px;top:671px;width:1250px;height:1px;background:#cfcfcf"></div>
<div class="a" style="left:428px;top:695px;width:1250px;height:1px;background:#cfcfcf"></div>
<div class="a" style="left:428px;top:719px;width:1250px;height:1px;background:#cfcfcf"></div>
<div class="a" style="left:428px;top:743px;width:1250px;height:1px;background:#cfcfcf"></div>
<div class="a" style="left:428px;top:767px;width:1250px;height:1px;background:#cfcfcf"></div>
<div class="t" style="left:389px;width:200px;text-align:center;top:590px;font-size:11.5px;font-weight:bold;color:#fff;line-height:13px;letter-spacing:0.3px">DONE</div>
<div class="t" style="left:480px;width:120px;text-align:center;top:581px;font-size:11.5px;font-weight:bold;color:#fff;line-height:16px;letter-spacing:0.3px">LINE<br>#</div>
<div class="t" style="left:521px;width:200px;text-align:center;top:590px;font-size:11.5px;font-weight:bold;color:#fff;line-height:13px;letter-spacing:0.3px">ATTACHMENTS</div>
<div class="t" style="left:638.5px;width:200px;text-align:center;top:590px;font-size:11.5px;font-weight:bold;color:#fff;line-height:13px;letter-spacing:0.3px">RECORD TYPE</div>
<div class="t" style="left:777px;width:120px;text-align:center;top:581px;font-size:11.5px;font-weight:bold;color:#fff;line-height:16px;letter-spacing:0.3px">RECORD<br>#</div>
<div class="t" style="left:979px;width:200px;text-align:center;top:590px;font-size:11.5px;font-weight:bold;color:#fff;line-height:13px;letter-spacing:0.3px">DESCRIPTION</div>
<div class="t" style="left:1231px;width:200px;text-align:center;top:590px;font-size:11.5px;font-weight:bold;color:#fff;line-height:13px;letter-spacing:0.3px">STATUS</div>
<div class="t" style="left:1316px;width:200px;text-align:center;top:590px;font-size:11.5px;font-weight:bold;color:#fff;line-height:13px;letter-spacing:0.3px">REV.</div>
<div class="t" style="left:1450px;width:120px;text-align:center;top:581px;font-size:11.5px;font-weight:bold;color:#fff;line-height:16px;letter-spacing:0.3px">WORKFLOW<br>STEP</div>
<div class="a" style="left:1567px;top:577px;width:111px;height:70px;overflow:hidden"><div class="t" style="left:50px;top:13px;font-size:11.5px;font-weight:bold;color:#fff;line-height:13px;letter-spacing:0.3px">RESPONSIBLE</div></div>
<div class="a" style="left:574px;top:621px;width:71px;height:19px;border:1px solid #9a9a9a;background:#fff"></div>
<svg class="a" style="left:649px;top:624px" width="17" height="13" viewBox="0 0 17 13"><path d="M0.5 2h16M3.5 6.5h10M7 11h3" stroke="#8a8a8a" stroke-width="1.8"/></svg>
<div class="a" style="left:684px;top:621px;width:81px;height:19px;border:1px solid #9a9a9a;background:#fff"></div>
<svg class="a" style="left:769px;top:624px" width="17" height="13" viewBox="0 0 17 13"><path d="M0.5 2h16M3.5 6.5h10M7 11h3" stroke="#8a8a8a" stroke-width="1.8"/></svg>
<div class="a" style="left:809px;top:621px;width:43px;height:19px;border:1px solid #9a9a9a;background:#fff"></div>
<svg class="a" style="left:856px;top:624px" width="17" height="13" viewBox="0 0 17 13"><path d="M0.5 2h16M3.5 6.5h10M7 11h3" stroke="#8a8a8a" stroke-width="1.8"/></svg>
<div class="a" style="left:881px;top:621px;width:280px;height:19px;border:1px solid #9a9a9a;background:#fff"></div>
<svg class="a" style="left:1166px;top:624px" width="17" height="13" viewBox="0 0 17 13"><path d="M0.5 2h16M3.5 6.5h10M7 11h3" stroke="#8a8a8a" stroke-width="1.8"/></svg>
<div class="a" style="left:1292px;top:621px;width:59px;height:19px;border:1px solid #9a9a9a;background:#fff"></div>
<svg class="a" style="left:1355px;top:624px" width="17" height="13" viewBox="0 0 17 13"><path d="M0.5 2h16M3.5 6.5h10M7 11h3" stroke="#8a8a8a" stroke-width="1.8"/></svg>
<div class="a" style="left:1385px;top:621px;width:47px;height:19px;border:1px solid #9a9a9a;background:#fff"></div>
<svg class="a" style="left:1436px;top:624px" width="17" height="13" viewBox="0 0 17 13"><path d="M0.5 2h16M3.5 6.5h10M7 11h3" stroke="#8a8a8a" stroke-width="1.8"/></svg>
<div class="a" style="left:1462px;top:621px;width:71px;height:19px;border:1px solid #9a9a9a;background:#fff"></div>
<svg class="a" style="left:1537px;top:624px" width="17" height="13" viewBox="0 0 17 13"><path d="M0.5 2h16M3.5 6.5h10M7 11h3" stroke="#8a8a8a" stroke-width="1.8"/></svg>
<div class="a" style="left:1567px;top:617px;width:111px;height:29px;overflow:hidden"><div class="a" style="left:7px;top:4px;width:120px;height:19px;border:1px solid #9a9a9a;background:#fff"></div></div>
<div class="a" style="left:476px;top:624px;width:12px;height:12px;border:1px solid #aaa;border-radius:2px;background:#e6e6e6"></div>
<svg class="a" style="left:492px;top:624px" width="17" height="13" viewBox="0 0 17 13"><path d="M0.5 2h16M3.5 6.5h10M7 11h3" stroke="#8a8a8a" stroke-width="1.8"/></svg>
<svg class="a" style="left:437px;top:649px" width="20" height="20" viewBox="0 0 20 20"><g fill="none" stroke="#959595" stroke-width="1.7" transform="rotate(-45 10 10)"><rect x="1.8" y="7" width="9.5" height="6" rx="3"/><rect x="8.7" y="7" width="9.5" height="6" rx="3"/></g></svg>
<div class="a" style="left:484px;top:654px;width:11px;height:11px;border:1.2px solid #555;background:#fff"></div>
<div class="t" style="left:500px;width:59px;text-align:right;top:653px;font-size:11px;color:#444;line-height:14px;letter-spacing:0.5px">1</div>
<div class="t" style="left:600px;width:69px;text-align:right;top:653px;font-size:11px;color:#444;line-height:14px;letter-spacing:1.05px"><u>(0)</u></div>
<div class="t" style="left:684px;top:653px;font-size:11px;color:#444;line-height:14px;letter-spacing:0.95px">Budgets</div>
<div class="t" style="left:800px;width:66px;text-align:right;top:653px;font-size:11px;color:#444;line-height:14px;letter-spacing:1.05px"><u>35</u></div>
<div class="t" style="left:881px;top:653px;font-size:11px;color:#444;line-height:14px;letter-spacing:1.15px">Meet to Define Procurement Strategy</div>
<div class="t" style="left:1292px;top:653px;font-size:11px;color:#444;line-height:14px;letter-spacing:1.15px">Approved</div>
<div class="t" style="left:1400px;width:43px;text-align:right;top:653px;font-size:11px;color:#444;line-height:14px;letter-spacing:0.5px">0</div>
<div class="a" style="left:1567px;top:647px;width:111px;height:23px;overflow:hidden"><div class="t" style="left:7px;top:6px;font-size:11px;color:#444;line-height:14px;letter-spacing:1.15px">Jon Lloyd,Steve Prentiss</div></div>
<svg class="a" style="left:437px;top:673px" width="20" height="20" viewBox="0 0 20 20"><g fill="none" stroke="#959595" stroke-width="1.7" transform="rotate(-45 10 10)"><rect x="1.8" y="7" width="9.5" height="6" rx="3"/><rect x="8.7" y="7" width="9.5" height="6" rx="3"/></g></svg>
<div class="a" style="left:484px;top:678px;width:11px;height:11px;border:1.2px solid #555;background:#fff"></div>
<div class="t" style="left:500px;width:59px;text-align:right;top:677px;font-size:11px;color:#444;line-height:14px;letter-spacing:0.5px">2</div>
<div class="t" style="left:600px;width:69px;text-align:right;top:677px;font-size:11px;color:#444;line-height:14px;letter-spacing:1.05px"><u>(0)</u></div>
<div class="t" style="left:684px;top:677px;font-size:11px;color:#444;line-height:14px;letter-spacing:0.95px">Bid Packages</div>
<div class="t" style="left:881px;top:677px;font-size:11px;color:#444;line-height:14px;letter-spacing:1.15px">Define Scope of Work Documents</div>
<div class="a" style="left:1567px;top:671px;width:111px;height:23px;overflow:hidden"><div class="t" style="left:7px;top:6px;font-size:11px;color:#444;line-height:14px;letter-spacing:1.15px">Steve Prentiss,Sarah Karter</div></div>
<svg class="a" style="left:437px;top:697px" width="20" height="20" viewBox="0 0 20 20"><g fill="none" stroke="#959595" stroke-width="1.7" transform="rotate(-45 10 10)"><rect x="1.8" y="7" width="9.5" height="6" rx="3"/><rect x="8.7" y="7" width="9.5" height="6" rx="3"/></g></svg>
<div class="a" style="left:484px;top:702px;width:11px;height:11px;border:1.2px solid #555;background:#fff"></div>
<div class="t" style="left:500px;width:59px;text-align:right;top:701px;font-size:11px;color:#444;line-height:14px;letter-spacing:0.5px">3</div>
<div class="t" style="left:600px;width:69px;text-align:right;top:701px;font-size:11px;color:#444;line-height:14px;letter-spacing:1.05px"><u>(0)</u></div>
<div class="t" style="left:684px;top:701px;font-size:11px;color:#444;line-height:14px;letter-spacing:0.95px">Bid Packages</div>
<div class="t" style="left:881px;top:701px;font-size:11px;color:#444;line-height:14px;letter-spacing:1.15px">Issue Invitations to Bid</div>
<div class="a" style="left:1567px;top:695px;width:111px;height:23px;overflow:hidden"><div class="t" style="left:7px;top:6px;font-size:11px;color:#444;line-height:14px;letter-spacing:1.15px">Steve Prentiss,Sarah Karter</div></div>
<svg class="a" style="left:437px;top:721px" width="20" height="20" viewBox="0 0 20 20"><g fill="none" stroke="#959595" stroke-width="1.7" transform="rotate(-45 10 10)"><rect x="1.8" y="7" width="9.5" height="6" rx="3"/><rect x="8.7" y="7" width="9.5" height="6" rx="3"/></g></svg>
<div class="a" style="left:484px;top:726px;width:11px;height:11px;border:1.2px solid #555;background:#fff"></div>
<div class="t" style="left:500px;width:59px;text-align:right;top:725px;font-size:11px;color:#444;line-height:14px;letter-spacing:0.5px">4</div>
<div class="t" style="left:600px;width:69px;text-align:right;top:725px;font-size:11px;color:#444;line-height:14px;letter-spacing:1.05px"><u>(0)</u></div>
<div class="t" style="left:684px;top:725px;font-size:11px;color:#444;line-height:14px;letter-spacing:0.95px">Online Bids</div>
<div class="t" style="left:881px;top:725px;font-size:11px;color:#444;line-height:14px;letter-spacing:1.15px">Review Bid Matrix</div>
<div class="a" style="left:1567px;top:719px;width:111px;height:23px;overflow:hidden"><div class="t" style="left:7px;top:6px;font-size:11px;color:#444;line-height:14px;letter-spacing:1.15px">Sarah Karter</div></div>
<svg class="a" style="left:437px;top:745px" width="20" height="20" viewBox="0 0 20 20"><g fill="none" stroke="#959595" stroke-width="1.7" transform="rotate(-45 10 10)"><rect x="1.8" y="7" width="9.5" height="6" rx="3"/><rect x="8.7" y="7" width="9.5" height="6" rx="3"/></g></svg>
<div class="a" style="left:484px;top:750px;width:11px;height:11px;border:1.2px solid #555;background:#fff"></div>
<div class="t" style="left:500px;width:59px;text-align:right;top:749px;font-size:11px;color:#444;line-height:14px;letter-spacing:0.5px">5</div>
<div class="t" style="left:600px;width:69px;text-align:right;top:749px;font-size:11px;color:#444;line-height:14px;letter-spacing:1.05px"><u>(0)</u></div>
<div class="t" style="left:684px;top:749px;font-size:11px;color:#444;line-height:14px;letter-spacing:0.95px">Online Bids</div>
<div class="t" style="left:881px;top:749px;font-size:11px;color:#444;line-height:14px;letter-spacing:1.15px">Award Contract</div>
<div class="a" style="left:1567px;top:743px;width:111px;height:23px;overflow:hidden"><div class="t" style="left:7px;top:6px;font-size:11px;color:#444;line-height:14px;letter-spacing:1.15px">Steve Prentiss</div></div>

<div class="a" style="left:428px;top:768px;width:1250px;height:17px;background:#f0f0f0"></div>
<div class="a" style="left:445px;top:771px;width:618px;height:12px;background:#c1c1c1"></div>
<svg class="a" style="left:433px;top:772px" width="6" height="8"><path d="M5 0v8L0 4z" fill="#aaa"/></svg>
<svg class="a" style="left:1667px;top:772px" width="6" height="8"><path d="M0 0v8l5-4z" fill="#222"/></svg>
<div class="a" style="left:428px;top:785px;width:1250px;height:25px;background:#999;border-top:1px solid #888"></div>
<div class="a" style="left:428px;top:810px;width:1250px;height:37px;background:#ececec"></div>
<div class="a" style="left:463px;top:811px;width:1px;height:36px;background:#fff"></div>


<!-- TABLE TOOLBAR -->
<svg class="a" style="left:430px;top:546px" width="600" height="28" viewBox="430 546 600 28">
 <g fill="#8f8f8f">
  <!-- pencil -->
  <path d="M442 566.5l1.2-4.6 9.6-9.6 3.4 3.4-9.6 9.6z"/>
  <path d="M453.6 551.5l1.5-1.5c0.4-0.4 1-0.4 1.4 0l2 2c0.4 0.4 0.4 1 0 1.4l-1.5 1.5z"/>
  <!-- plus -->
  <rect x="522.5" y="551" width="2.2" height="15.5"/>
  <rect x="516" y="557.6" width="15.5" height="2.2"/>
  <!-- trash -->
  <rect x="773" y="552.3" width="14" height="1.3"/>
  <path d="M777 552.5l0.8-2c0.2-0.4 0.5-0.6 0.9-0.6h2.6c0.4 0 0.7 0.2 0.9 0.6l0.8 2h-1.2l-0.6-1.5h-2.4l-0.6 1.5z"/>
  <path d="M774.5 553.5h11l-0.5 11c0 0.8-0.6 1.3-1.4 1.3h-7.2c-0.8 0-1.4-0.5-1.4-1.3zM775.7 553.5l0.4 10.8c0 0.3 0.2 0.4 0.4 0.4h7c0.2 0 0.4-0.1 0.4-0.4l0.4-10.8z" fill-rule="evenodd"/>
  <rect x="777.5" y="555.5" width="1" height="7.5"/><rect x="779.5" y="555.5" width="1" height="7.5"/><rect x="781.5" y="555.5" width="1" height="7.5"/>
 </g>
 <g fill="none" stroke="#8f8f8f">
  <!-- link -->
  <g stroke-width="1.6" stroke-linecap="round">
   <path d="M595 561.5l5.5-5.5"/>
   <path d="M597.5 554.5l2.2-2.2a3 3 0 0 1 4.2 4.2l-2.2 2.2"/>
   <path d="M598 563.5l-2.2 2.2a3 3 0 0 1-4.2-4.2l2.2-2.2"/>
  </g>
  <!-- refresh -->
  <path d="M865.5 556.5a6.8 6.8 0 0 1 12.3-1.2" stroke-width="2.6"/>
  <path d="M877.5 561.5a6.8 6.8 0 0 1-12.3 1.2" stroke-width="2.6"/>
  <!-- layouts grid -->
  <rect x="968.8" y="552.3" width="14.5" height="13" stroke-width="1.3"/>
  <path d="M968.8 556.6h14.5M968.8 561h14.5M973.6 552.3v13M978.4 552.3v13" stroke-width="1.1"/>
 </g>
 <path d="M874.5 551l5.5 0.6-1.5 5.2z" fill="#8f8f8f"/>
 <path d="M868.5 567l-5.5-0.6 1.5-5.2z" fill="#8f8f8f"/>
</svg>
<div class="t" style="left:461px;top:552px;font-size:11px;color:#555;line-height:14px;letter-spacing:1.05px">Edit</div>
<div class="t" style="left:536px;top:552px;font-size:11px;color:#555;line-height:14px;letter-spacing:1.05px">Add</div>
<div class="t" style="left:610px;top:552px;font-size:11px;color:#555;line-height:14px;letter-spacing:1.05px">Link PMWeb Record(s)</div>
<div class="t" style="left:792px;top:552px;font-size:11px;color:#555;line-height:14px;letter-spacing:1.05px">Delete</div>
<div class="t" style="left:884px;top:552px;font-size:11px;color:#555;line-height:14px;letter-spacing:1.05px">Refresh</div>
<div class="t" style="left:988px;top:552px;font-size:11px;color:#555;line-height:14px;letter-spacing:1.05px">Layouts</div>

<!-- PAGER -->
<svg class="a" style="left:470px;top:812px" width="240" height="34" viewBox="470 812 240 34">
 <g fill="#999">
  <rect x="478.5" y="820" width="2" height="15"/>
  <path d="M490 820v15l-8.5-7.5z"/>
  <path d="M504 820v15l-8.5-7.5z"/>
  <path d="M548.5 820v15l8.5-7.5z"/>
  <path d="M563.5 820v15l8.5-7.5z"/>
  <rect x="572.5" y="820" width="2" height="15"/>
 </g>
 <rect x="509.5" y="817" width="16" height="24.5" fill="#fff" stroke="#111" stroke-width="1.4"/>
</svg>
<div class="t" style="left:509px;top:821px;width:17px;text-align:center;font-size:11px;color:#444;line-height:14px;letter-spacing:0.5px">1</div>
<div class="t" style="left:531px;top:820px;font-size:11px;color:#444;line-height:14px;letter-spacing:0.5px">2</div>
<div class="t" style="left:597px;top:820px;font-size:11.5px;color:#8a8a8a;line-height:14px;letter-spacing:0.35px">PAGE SIZE</div>
<div class="a" style="left:662px;top:816px;width:40px;height:24px;border:1px solid #444;background:#fff"></div>
<div class="a" style="left:682px;top:817px;width:1px;height:22px;background:#444"></div>
<div class="t" style="left:664px;top:821px;font-size:12px;color:#555;line-height:14px">5</div>
<svg class="a" style="left:687px;top:825px" width="10" height="6"><path d="M0 0h10L5 5.5z" fill="#111"/></svg>

<div class="a" style="left:424px;top:518px;width:628px;height:59px;border:1px solid #d8d8d8"></div>
<div class="a" style="left:424px;top:571px;width:1258px;height:287px;border:1px solid #d8d8d8"></div>
<!-- ANNOTATIONS -->
<div class="t" style="left:0;width:142px;text-align:right;top:64px;font-size:13.4px;color:#72b843;line-height:16px;letter-spacing:-0.4px">CONTROL PANEL</div>
<div class="t" style="left:0;width:142px;text-align:right;top:118px;font-size:13.4px;color:#72b843;line-height:16px;letter-spacing:-0.4px">BREADCRUMBS BAR</div>
<div class="t" style="left:0;width:142px;text-align:right;top:173px;font-size:13.4px;color:#72b843;line-height:16px;letter-spacing:-0.4px">HEADER TOOLBAR</div>
<div class="t" style="left:0;width:142px;text-align:right;top:228px;font-size:13.4px;color:#72b843;line-height:16px;letter-spacing:-0.4px">RECORD TABS</div>
<div class="t" style="left:0;width:142px;text-align:right;top:282px;font-size:13.4px;color:#72b843;line-height:16px;letter-spacing:-0.4px">HEADER</div>
<div class="t" style="left:0;width:142px;text-align:right;top:337px;font-size:13.4px;color:#72b843;line-height:16px;letter-spacing:-0.4px">TABLE TOOLBAR</div>
<div class="t" style="left:0;width:142px;text-align:right;top:392px;font-size:13.4px;color:#72b843;line-height:16px;letter-spacing:-0.4px">DETAILS TABLE</div>
<svg class="a" style="left:0;top:0" width="1694" height="870" viewBox="0 0 1694 870">
<line x1="170.6" y1="62.3" x2="214.5" y2="22.5" stroke="#6cb83a" stroke-width="1.25"/>
<line x1="172.9" y1="119.7" x2="427" y2="7" stroke="#6cb83a" stroke-width="1.25"/>
<line x1="172.6" y1="174.2" x2="434" y2="43" stroke="#6cb83a" stroke-width="1.25"/>
<line x1="172.4" y1="228.7" x2="421" y2="92" stroke="#6cb83a" stroke-width="1.25"/>
<line x1="172.5" y1="282.9" x2="428" y2="146.5" stroke="#6cb83a" stroke-width="1.25"/>
<line x1="171.8" y1="351.2" x2="425" y2="521" stroke="#6cb83a" stroke-width="1.25"/>
<line x1="171.9" y1="406.0" x2="429" y2="571.5" stroke="#6cb83a" stroke-width="1.25"/>
<circle cx="161" cy="71" r="14" fill="#6ab535"/>
<text x="161" y="76" text-anchor="middle" font-family="Liberation Sans" font-weight="bold" font-size="14" fill="#fff">1</text>
<circle cx="161" cy="125" r="14" fill="#6ab535"/>
<text x="161" y="130" text-anchor="middle" font-family="Liberation Sans" font-weight="bold" font-size="14" fill="#fff">2</text>
<circle cx="161" cy="180" r="14" fill="#6ab535"/>
<text x="161" y="185" text-anchor="middle" font-family="Liberation Sans" font-weight="bold" font-size="14" fill="#fff">3</text>
<circle cx="161" cy="235" r="14" fill="#6ab535"/>
<text x="161" y="240" text-anchor="middle" font-family="Liberation Sans" font-weight="bold" font-size="14" fill="#fff">4</text>
<circle cx="161" cy="289" r="14" fill="#6ab535"/>
<text x="161" y="294" text-anchor="middle" font-family="Liberation Sans" font-weight="bold" font-size="14" fill="#fff">5</text>
<circle cx="161" cy="344" r="14" fill="#6ab535"/>
<text x="161" y="349" text-anchor="middle" font-family="Liberation Sans" font-weight="bold" font-size="14" fill="#fff">6</text>
<circle cx="161" cy="399" r="14" fill="#6ab535"/>
<text x="161" y="404" text-anchor="middle" font-family="Liberation Sans" font-weight="bold" font-size="14" fill="#fff">7</text>
</svg>
</body></html>
